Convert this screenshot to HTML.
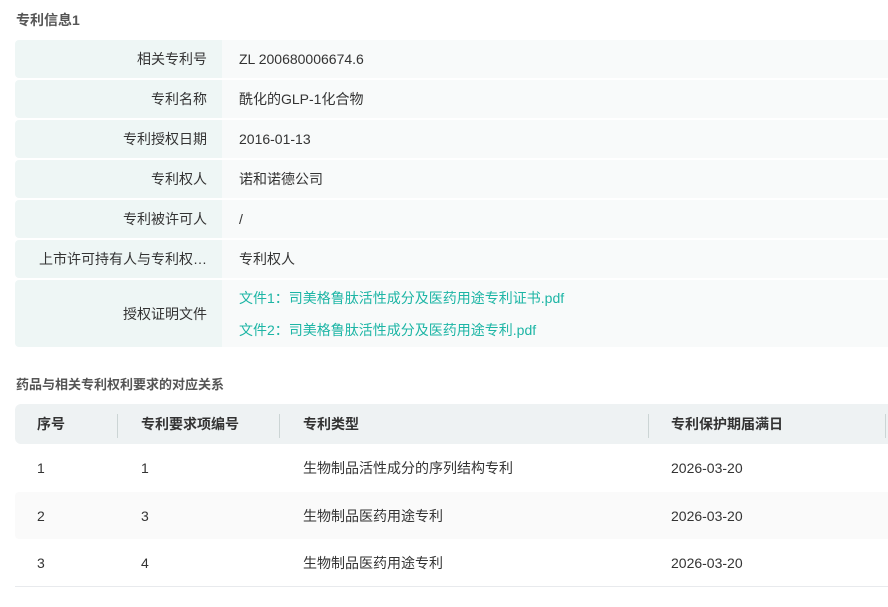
<!DOCTYPE html>
<html><head><meta charset="utf-8">
<style>
*{margin:0;padding:0;box-sizing:border-box}
body{width:888px;height:607px;background:#fff;font-family:"Liberation Sans","Noto Sans CJK SC",sans-serif;font-size:14px;color:#333;position:relative;overflow:hidden}
.t{position:absolute;left:16px;font-weight:bold;color:#555}
.row{position:absolute;left:15px;width:873px;display:flex}
.lab{width:207px;background:#eef6f5;border-radius:4px 0 0 4px;text-align:right;padding-right:15px;display:flex;align-items:center;justify-content:flex-end;white-space:nowrap}
.val{flex:1;background:#f8fafa;padding-left:17px;display:flex;align-items:center}
.lnk{color:#1db5a5}
.hd{position:absolute;left:15px;top:404px;width:873px;height:40px;background:#eef2f3;border-radius:6px 0 0 6px;font-weight:bold}
.c{position:absolute;top:0;height:100%;display:flex;align-items:center}
.dv{position:absolute;top:10px;width:1px;height:24px;background:#ccd5d5}
.tr{position:absolute;left:15px;width:873px;height:47px}
</style></head><body>
<div class="t" style="top:10px">专利信息1</div>
<div class="row" style="top:40px;height:38px"><div class="lab">相关专利号</div><div class="val">ZL 200680006674.6</div></div>
<div class="row" style="top:80px;height:38px"><div class="lab">专利名称</div><div class="val">酰化的GLP-1化合物</div></div>
<div class="row" style="top:120px;height:38px"><div class="lab">专利授权日期</div><div class="val">2016-01-13</div></div>
<div class="row" style="top:160px;height:38px"><div class="lab">专利权人</div><div class="val">诺和诺德公司</div></div>
<div class="row" style="top:200px;height:38px"><div class="lab">专利被许可人</div><div class="val">/</div></div>
<div class="row" style="top:240px;height:38px"><div class="lab">上市许可持有人与专利权…</div><div class="val">专利权人</div></div>
<div class="row" style="top:280px;height:67px"><div class="lab">授权证明文件</div><div class="val" style="display:block;padding-top:2px;line-height:32px"><div class="lnk">文件1：司美格鲁肽活性成分及医药用途专利证书.pdf</div><div class="lnk">文件2：司美格鲁肽活性成分及医药用途专利.pdf</div></div></div>
<div class="t" style="top:374px;font-size:13px">药品与相关专利权利要求的对应关系</div>
<div class="hd">
<div class="c" style="left:22px">序号</div>
<div class="dv" style="left:102px"></div>
<div class="c" style="left:126px">专利要求项编号</div>
<div class="dv" style="left:264px"></div>
<div class="c" style="left:288px">专利类型</div>
<div class="dv" style="left:633px"></div>
<div class="c" style="left:656px">专利保护期届满日</div>
<div class="dv" style="left:870px"></div>
</div>
<div class="tr" style="top:444px"><div class="c" style="left:22px">1</div><div class="c" style="left:126px">1</div><div class="c" style="left:288px">生物制品活性成分的序列结构专利</div><div class="c" style="left:656px">2026-03-20</div></div>
<div class="tr" style="top:492px;background:#fafafa;border-radius:4px 0 0 4px"><div class="c" style="left:22px">2</div><div class="c" style="left:126px">3</div><div class="c" style="left:288px">生物制品医药用途专利</div><div class="c" style="left:656px">2026-03-20</div></div>
<div class="tr" style="top:540px;border-bottom:1px solid #e8eaed"><div class="c" style="left:22px">3</div><div class="c" style="left:126px">4</div><div class="c" style="left:288px">生物制品医药用途专利</div><div class="c" style="left:656px">2026-03-20</div></div>
</body></html>
